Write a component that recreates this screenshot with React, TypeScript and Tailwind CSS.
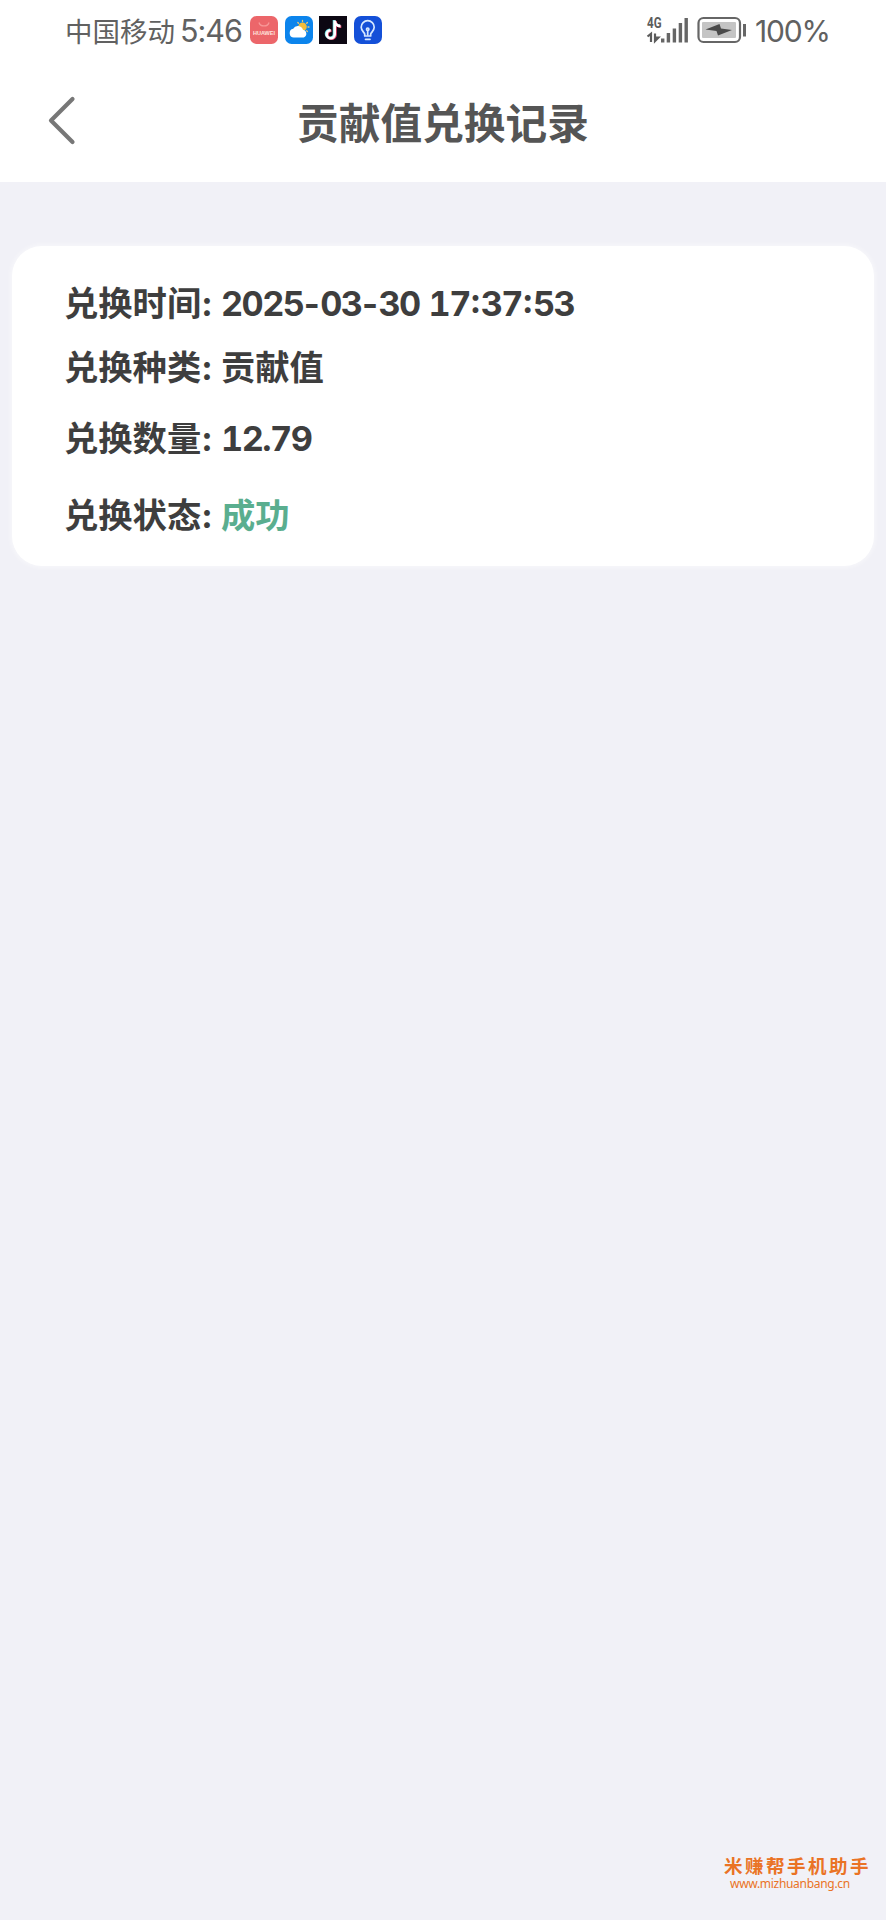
import React from "react";

const sans = "font-[Inter,'Noto_Sans_CJK_SC',sans-serif]";
const cjk = "font-['Noto_Sans_CJK_SC',sans-serif]";

function HuaweiIcon() {
  return (
    <svg width="28" height="28" viewBox="0 0 28 28">
      <rect width="28" height="28" rx="6.5" fill="#ec666a" />
      <path d="M9 6.500c1.200 4.600 8.800 4.600 10 0" fill="none" stroke="#f79696" strokeWidth="1.300" />
      <text x="14" y="19" textAnchor="middle" fontSize="6" fontWeight="700" fill="#ffe3df" fontFamily="Liberation Sans" textLength="22" lengthAdjust="spacingAndGlyphs">HUAWEI</text>
    </svg>
  );
}

function WeatherIcon() {
  return (
    <svg width="28" height="28" viewBox="0 0 28 28">
      <rect width="28" height="28" rx="6.5" fill="#0c84ec" />
      <g stroke="#e9c877" strokeWidth="1.300" strokeLinecap="round">
        <path d="M17.500 4.500v1M12.800 6.500l.7.800M22.400 6.500l-.7.800M24 11h-1M22.400 15.600l-.7-.8" />
      </g>
      <circle cx="17.500" cy="10.700" r="4.300" fill="#f5bd3a" />
      <path d="M8.800 21.500a4.400 4.400 0 0 1-.6-8.700 5.200 5.200 0 0 1 9.700 1 4 4 0 0 1 .8 7.700z" fill="#fff" />
    </svg>
  );
}

function TiktokIcon() {
  const note = "M15.700 4.500v13.700a4 4 0 1 1-4-4M15.700 5c.5 3 2.500 4.900 5.800 5.100";
  return (
    <svg width="28" height="28" viewBox="0 0 28 28">
      <rect width="28" height="28" fill="#0c0712" />
      <g fill="none" strokeWidth="2.600">
        <path d={note} stroke="#5fd8dc" transform="translate(-.7 -.5)" />
        <path d={note} stroke="#e8486e" transform="translate(.8 .6)" />
        <path d={note} stroke="#fff" />
      </g>
    </svg>
  );
}

function BulbIcon() {
  return (
    <svg width="28" height="28" viewBox="0 0 28 28">
      <rect width="28" height="28" rx="7" fill="#1450d8" />
      <g fill="none" stroke="#d5e8ff" strokeWidth="1.700" strokeLinecap="round" strokeLinejoin="round">
        <path d="M10.700 20v-2c0-1.300-3.500-3-3.500-6.800a6.500 6.500 0 0 1 13 0c0 3.800-3.500 5.500-3.500 6.800v2z" />
        <path d="M13.700 19v-4.500M11.500 23.300h4.500" />
        <circle cx="13.700" cy="13.200" r="1.200" />
      </g>
    </svg>
  );
}

function SignalIcon() {
  return (
    <svg width="43" height="28" viewBox="0 0 43 28" overflow="visible">
      <text x="0" y="12" fontSize="14.500" fontWeight="700" fill="#5c5c5c" fontFamily="Roboto" textLength="14.500" lengthAdjust="spacingAndGlyphs">4G</text>
      <path d="M.5 20.500l3.500-2.700V26M8 17.500V25l3.300-3.300H8" fill="none" stroke="#5c5c5c" strokeWidth="2.200" />
      <g fill="#666">
        <rect x="14" y="22.500" width="3.400" height="4" />
        <rect x="19.700" y="17" width="3.400" height="9.500" />
        <rect x="25.700" y="12.500" width="3.400" height="14" />
        <rect x="31.700" y="7" width="3.400" height="19.500" />
        <rect x="37.500" y="2" width="3.400" height="24.500" />
      </g>
    </svg>
  );
}

function BatteryIcon() {
  return (
    <svg width="50" height="28" viewBox="0 0 50 28">
      <rect x="1.500" y="2" width="41.500" height="24" rx="5" fill="none" stroke="#666" strokeWidth="2.200" />
      <rect x="5" y="6" width="34" height="16" rx="1" fill="#c4c4c4" />
      <path d="M8.500 13.500L22.500 8l1.500 4.500 11 1.500L21 19.500 19.500 15z" fill="#4a4a4a" />
      <rect x="46" y="8" width="3" height="12.500" fill="#666" />
    </svg>
  );
}

const separatorClass: Record<string, string> = {
  "-": "inline-block w-[17px] text-center",
  ":": "inline-block w-[11px] -translate-y-[3px] text-center",
  " ": "inline-block w-[9px]",
};

function Timestamp({ value }: { value: string }) {
  return (
    <span className="whitespace-nowrap">
      {value.split(/([-: ])/).map((part, i) =>
        part in separatorClass ? (
          <span key={i} className={separatorClass[part]}>{part}</span>
        ) : (
          <span key={i} className="tabular-nums tracking-[-1.600px]">{part}</span>
        ),
      )}
    </span>
  );
}

interface Row {
  label: string;
  value: React.ReactNode;
  height: string;
  valueClass: string;
}

const rows: Row[] = [
  { label: "兑换时间", value: <Timestamp value="2025-03-30 17:37:53" />, height: "h-16", valueClass: "" },
  { label: "兑换种类", value: "贡献值", height: "h-16", valueClass: "" },
  { label: "兑换数量", value: "12.79", height: "h-[79px]", valueClass: "tabular-nums tracking-[-1.500px]" },
  { label: "兑换状态", value: "成功", height: "h-[74px]", valueClass: "text-[#5aae8f]" },
];

export default function App() {
  return (
    <div className={`flex h-[1920px] w-[886px] flex-col overflow-hidden bg-[#f1f1f7] ${sans}`}>
      <header className="flex h-[182px] flex-col bg-white text-[#616161]">
        <div className="flex h-[59px] items-center justify-between pl-[65px] pr-[58px]">
          <div className="flex items-center whitespace-nowrap">
            <span className={`mt-0.5 w-[115px] text-[27.500px] leading-none ${cjk}`}>中国移动</span>
            <span className="mt-1 w-[70px] text-[30.500px] leading-none tracking-[-1px]">5:46</span>
            <div className="flex gap-[6.600px]">
              <HuaweiIcon />
              <WeatherIcon />
              <TiktokIcon />
              <BulbIcon />
            </div>
          </div>
          <div className="flex items-center">
            <SignalIcon />
            <span className="w-[7px]" />
            <BatteryIcon />
            <span className="ml-2 mt-[3px] w-[73px] whitespace-nowrap text-[30px] leading-none tracking-[-1.200px]">100%</span>
          </div>
        </div>
        <div className="grid h-[123px] grid-cols-[100px_1fr_100px] items-center">
          <svg className="mb-0.5 ml-[46px]" width="32" height="52" viewBox="0 0 32 52">
            <path d="M26.500 5L5 26.500 26.500 48" fill="none" stroke="#777" strokeWidth="4.200" strokeLinecap="round" strokeLinejoin="round" />
          </svg>
          <h1 className={`mt-0.5 text-center text-[41.700px] font-bold leading-none text-[#555] ${cjk}`}>贡献值兑换记录</h1>
        </div>
      </header>

      <main className="flex-1 px-3 pt-16">
        <section className="h-80 rounded-[30px] bg-white pl-[52px] pt-[26px] text-[34.300px] font-bold leading-none text-[#3e3e3e] shadow-[0_0_4px_2px_rgba(255,255,255,0.4)]">
          {rows.map((row) => (
            <div key={row.label} className={`flex items-center whitespace-nowrap ${row.height}`}>
              <span className="w-[157px]">{row.label}:</span>
              <span className={row.valueClass}>{row.value}</span>
            </div>
          ))}
        </section>
      </main>

      <footer className="flex h-16 flex-col items-end pr-[17px] text-[#ea7325]">
        <span className="w-[145px] whitespace-nowrap text-[18.500px] font-bold leading-[21px] tracking-[2.500px]">米赚帮手机助手</span>
        <span className="w-[139px] whitespace-nowrap text-[12px] leading-[14px] tracking-[-0.300px] font-['Noto_Sans',sans-serif]">www.mizhuanbang.cn</span>
      </footer>
    </div>
  );
}
